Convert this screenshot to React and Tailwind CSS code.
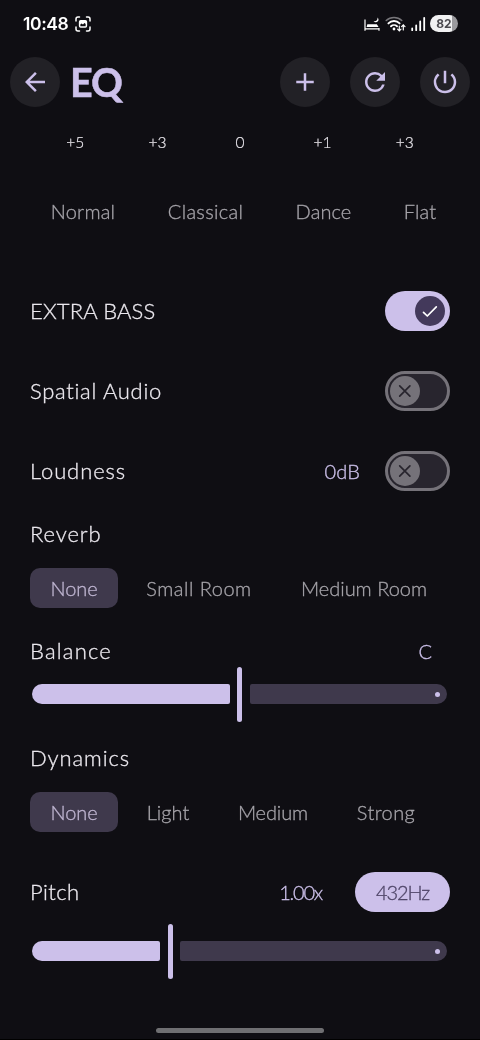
import React, { useState } from "react";
import { MdAdd, MdArrowBack, MdPowerSettingsNew, MdRefresh } from "react-icons/md";

const gains = ["+5", "+3", "0", "+1", "+3"];

const presets = [
  { name: "Normal", style: "w-[106px] tracking-[0.2px]" },
  { name: "Classical", style: "w-[117px] tracking-[0.3px]" },
  { name: "Dance", style: "w-[97px] tracking-[0.1px]" },
  { name: "Flat", style: "w-[74px] tracking-[0.2px]" },
];

const reverbs = [
  { name: "None", style: "w-[88px] tracking-[-0.1px]" },
  { name: "Small Room", style: "w-[146px] tracking-[0.5px]" },
  { name: "Medium Room", style: "w-[168px] tracking-[0px]" },
];

const dynamics = [
  { name: "None", style: "w-[88px] tracking-[-0.1px]" },
  { name: "Light", style: "w-[84px] tracking-[0px]" },
  { name: "Medium", style: "w-[110px] tracking-[-0.1px]" },
  { name: "Strong", style: "w-[100px] tracking-[0.4px]" },
];

function StatusBar() {
  return (
    <div className="flex h-[47px] items-center pl-[23px] pr-[22px] text-white">
      <span className="font-['Inter'] text-[17.5px] font-semibold leading-none tracking-[-0.4px]">10:48</span>
      <svg className="ml-[7px] size-4" viewBox="0 0 16 16" fill="none">
        <path
          d="M1 5V3a2 2 0 0 1 2-2h1.5M11.5 1H13a2 2 0 0 1 2 2v2M15 11v2a2 2 0 0 1-2 2h-1.5M4.500 15H3a2 2 0 0 1-2-2v-2"
          stroke="currentColor"
          strokeWidth="1.5"
          strokeLinecap="round"
        />
        <rect x="4.6" y="4.8" width="6.800" height="6.200" rx="1" stroke="currentColor" strokeWidth="1.5" />
        <path d="M5 5h6v3l-1.600-1L8 8.600 6.500 7.500 5 8.500Z" fill="currentColor" />
      </svg>

      {/* Bedtime mode */}
      <svg className="ml-auto h-4 w-[16px]" viewBox="0 0 16 16" fill="none">
        <path d="M1 3.500V14.800M1 12.800H15M15 12V14.800" stroke="currentColor" strokeWidth="1.200" />
        <path d="M2.600 11 3.300 8.300H12.800L14.600 11Z" fill="currentColor" />
        <path d="M13.300 1.500A2.600 2.600 0 1 1 9.600 4.900 2.700 2.700 0 0 0 13.300 1.500Z" fill="currentColor" />
      </svg>

      {/* Wifi with traffic arrows */}
      <svg className="ml-[5px] h-4 w-[21px]" viewBox="0 0 21 16" fill="none" strokeLinecap="round">
        <path d="M1.200 4.500A11.500 11.500 0 0 1 16.800 4.500" stroke="#77767a" strokeWidth="1.500" />
        <path d="M3.400 7.400A7.800 7.800 0 0 1 14.600 7.400" stroke="currentColor" strokeWidth="1.900" />
        <path d="M6 10.300A4.300 4.300 0 0 1 12 10.300" stroke="currentColor" strokeWidth="1.900" />
        <circle cx="9" cy="13" r="1.400" fill="currentColor" />
        <path
          d="M14.300 10V14.800M12.600 13.200 14.300 14.900 16 13.200M18.300 14V9M16.600 10.600 18.300 8.900 20 10.600"
          stroke="currentColor"
          strokeWidth="1.200"
        />
      </svg>

      <svg className="ml-[5px] h-4 w-[15px]" viewBox="0 0 15 16" stroke="currentColor" strokeWidth="1.800" strokeLinecap="round">
        <path d="M1.200 14.200V12.500M5.200 14.200V9.500M9.200 14.200V5.500M13.200 14.200V1.800" />
      </svg>

      <div className="ml-[4px] flex h-[17px] w-[28px] items-center justify-center rounded-full bg-[linear-gradient(90deg,#f1f1f2_80%,#9b9a9e_80%)]">
        <span className="font-['Inter'] text-[12px] font-bold leading-none text-[#4a494e]">82</span>
      </div>
    </div>
  );
}

function RoundButton({ label, children, onClick }) {
  return (
    <button
      type="button"
      aria-label={label}
      onClick={onClick}
      className="flex size-[50px] items-center justify-center rounded-full bg-[#222126] text-[30px] text-[#ccc0ea]"
    >
      {children}
    </button>
  );
}

function Toggle({ label, checked, onChange }) {
  return (
    <button
      type="button"
      role="switch"
      aria-label={label}
      aria-checked={checked}
      onClick={() => onChange(!checked)}
      className={
        checked
          ? "flex h-10 w-[65px] items-center justify-end rounded-full bg-[#ccc0ea] pr-[5px]"
          : "flex h-10 w-[65px] items-center rounded-full border-3 border-[#757279] bg-[#28252e] pl-[2px]"
      }
    >
      <span
        className={
          checked
            ? "flex size-[30px] items-center justify-center rounded-full bg-[#43395b] text-white"
            : "flex size-[30px] shrink-0 items-center justify-center rounded-full bg-[#757279] text-[#28252e]"
        }
      >
        <svg className="size-5" viewBox="0 0 20 20" fill="none" stroke="currentColor" strokeWidth="1.700" strokeLinecap="round">
          {checked ? <path d="M3.500 11.300 7.300 15 16.300 5.900" strokeLinejoin="round" /> : <path d="M4.700 4.900 14.900 15.100M14.900 4.900 4.700 15.100" />}
        </svg>
      </span>
    </button>
  );
}

function Chips({ items, value, onChange, gap = "gap-2" }) {
  return (
    <div className={`flex h-10 ${gap}`}>
      {items.map(({ name, style }) => (
        <button
          key={name}
          type="button"
          onClick={() => onChange(name)}
          className={`h-full shrink-0 rounded-[10px] pb-px text-[20px] whitespace-nowrap ${style} ${
            value === name ? "bg-[#3f394c] text-[#bfb5d1]" : "text-[#a6a4aa]"
          }`}
        >
          {name}
        </button>
      ))}
    </div>
  );
}

function Slider({ percent }) {
  return (
    <div className="mr-[3px] ml-[2px] flex h-[55px] items-center">
      <div
        className="mb-px h-5 shrink-0 rounded-l-[10px] rounded-r-[2px] bg-[#ccc0ea]"
        style={{ width: `calc(${percent}% - 10px)` }}
      />
      <div className="ml-[7.5px] h-full w-[5px] shrink-0 rounded-full bg-[#ccc0ea]" />
      <div className="mb-px ml-[7.5px] flex h-5 flex-1 items-center justify-end rounded-l-[2px] rounded-r-[10px] bg-[#3f394c] pr-[7.5px]">
        <span className="size-[5px] rounded-full bg-[#ccc0ea]" />
      </div>
    </div>
  );
}

export default function App() {
  const [preset, setPreset] = useState(null);
  const [bass, setBass] = useState(true);
  const [spatial, setSpatial] = useState(false);
  const [loudness, setLoudness] = useState(false);
  const [reverb, setReverb] = useState("None");
  const [dynamic, setDynamic] = useState("None");

  return (
    <div className="h-[1040px] w-[480px] bg-[#0f0e13]">
      <div className="flex h-full flex-col overflow-hidden border-b border-black font-['Lato','Liberation_Sans',sans-serif] font-light text-[#ebe8ee] antialiased will-change-transform">
        <StatusBar />

        <header className="mt-[10px] flex h-[50px] items-center px-[10px]">
          <RoundButton label="Back">
            <MdArrowBack />
          </RoundButton>
          <h1 className="ml-[10px] text-[39.5px] font-bold leading-none tracking-[-1px] text-[#ccc0ea] [-webkit-text-stroke:0.5px_#ccc0ea]">
            EQ
          </h1>
          <div className="ml-auto flex gap-5">
            <RoundButton label="Add preset">
              <MdAdd />
            </RoundButton>
            <RoundButton label="Reset" onClick={() => setPreset(null)}>
              <MdRefresh />
            </RoundButton>
            <RoundButton label="Power">
              <MdPowerSettingsNew />
            </RoundButton>
          </div>
        </header>

        <div className="mt-[25px] grid grid-cols-5 px-[34px] text-center text-[15.5px] leading-5 [-webkit-text-stroke:0.2px]">
          {gains.map((gain, i) => (
            <span key={i}>{gain}</span>
          ))}
        </div>

        <main className="flex flex-col px-[30px] text-[22px] leading-[30px] [-webkit-text-stroke:0.3px]">
          <div className="mt-[39px]">
            <Chips items={presets} value={preset} onChange={setPreset} gap="gap-[11px]" />
          </div>

          <div className="mt-[60px] flex h-10 items-center justify-between">
            <span className="tracking-[0.15px]">EXTRA BASS</span>
            <Toggle label="Extra bass" checked={bass} onChange={setBass} />
          </div>
          <div className="mt-10 flex h-10 items-center justify-between">
            <span className="tracking-[0.7px]">Spatial Audio</span>
            <Toggle label="Spatial audio" checked={spatial} onChange={setSpatial} />
          </div>
          <div className="mt-10 flex h-10 items-center">
            <span className="tracking-[0.9px]">Loudness</span>
            <span className="mr-[25px] ml-auto text-[20px] tracking-[0.1px] text-[#ccc0ea]">0dB</span>
            <Toggle label="Loudness" checked={loudness} onChange={setLoudness} />
          </div>

          <h2 className="mt-[28px] tracking-[0.9px]">Reverb</h2>
          <div className="mt-[19px]">
            <Chips items={reverbs} value={reverb} onChange={setReverb} />
          </div>

          <div className="mt-[28px] flex items-center justify-between">
            <h2 className="tracking-[1.2px]">Balance</h2>
            <span className="mr-[18px] text-[20px] text-[#ccc0ea]">C</span>
          </div>
          <div className="mt-px">
            <Slider percent={50} />
          </div>

          <h2 className="mt-[21px] tracking-[0.9px]">Dynamics</h2>
          <div className="mt-[19px]">
            <Chips items={dynamics} value={dynamic} onChange={setDynamic} />
          </div>

          <div className="mt-10 flex h-10 items-center">
            <h2 className="tracking-[0.4px]">Pitch</h2>
            <span className="mr-[33px] ml-auto text-[20px] tracking-[-1.2px] text-[#ccc0ea]">1.00x</span>
            <button type="button" className="h-10 w-[95px] rounded-full bg-[#ccc0ea] pb-px text-[20px] tracking-[-1.1px] text-[#4f4568]">
              432Hz
            </button>
          </div>
          <div className="mt-[12px]">
            <Slider percent={33.3} />
          </div>
        </main>

        <div className="mx-auto mt-auto mb-[6px] h-[5px] w-[168px] rounded-full bg-[#6f6f72]" />
      </div>
    </div>
  );
}
